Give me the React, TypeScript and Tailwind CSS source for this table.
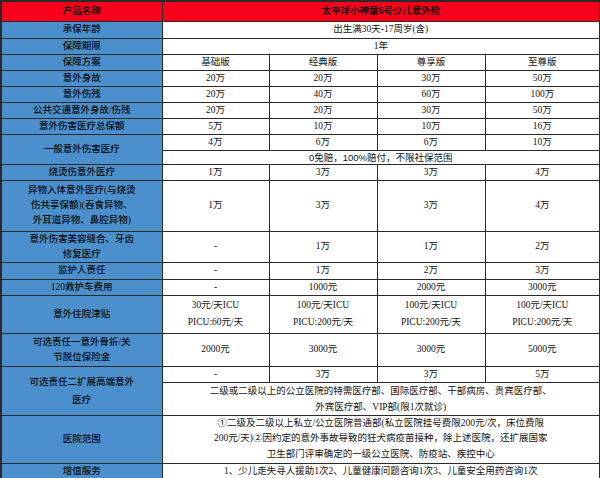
import type { ReactNode } from 'react'

const serif = 'font-["Liberation_Serif","Noto_Sans_CJK_SC",serif]'

function Label({ children, rowSpan }: { children: ReactNode; rowSpan?: number }) {
  return (
    <td
      rowSpan={rowSpan}
      className="border border-[#2a2a2a] bg-[#4b8fcc] px-1 text-center align-middle text-[9.5px] font-medium leading-[15px] text-[#0d0d0d]"
    >
      {children}
    </td>
  )
}

function Cell({ children, colSpan }: { children: ReactNode; colSpan?: number }) {
  return (
    <td
      colSpan={colSpan}
      className="border border-[#2a2a2a] bg-white px-1 text-center align-middle text-[9.5px] leading-[15px] text-[#111]"
    >
      {children}
    </td>
  )
}

function HeadCell({ children, colSpan }: { children: ReactNode; colSpan?: number }) {
  return (
    <td
      colSpan={colSpan}
      className="border border-[#2a2a2a] bg-[#f8001c] text-center align-middle text-[9.5px] leading-[15px]"
    >
      <span className="font-semibold text-[#1a0000]">{children}</span>
    </td>
  )
}

const simpleRows: { label: string; values: string[] }[] = [
  { label: '意外身故', values: ['20万', '20万', '30万', '50万'] },
  { label: '意外伤残', values: ['20万', '40万', '60万', '100万'] },
  { label: '公共交通意外身故/伤残', values: ['20万', '20万', '30万', '50万'] },
  { label: '意外伤害医疗总保额', values: ['5万', '10万', '10万', '16万'] },
]

export default function App() {
  return (
    <div className={`w-[600px] bg-white ${serif}`}>
      <table className="w-[599px] table-fixed border-collapse border-2 border-[#2a2a2a]">
        <colgroup>
          <col className="w-[161px]" />
          <col className="w-[107px]" />
          <col className="w-[108px]" />
          <col className="w-[108px]" />
          <col className="w-[115px]" />
        </colgroup>
        <tbody>
          <tr className="h-[20px]">
            <HeadCell>产品名称</HeadCell>
            <HeadCell colSpan={4}>太平洋小神童6号少儿意外险</HeadCell>
          </tr>
          <tr className="h-[17px]">
            <Label>承保年龄</Label>
            <Cell colSpan={4}>出生满30天-17周岁(含)</Cell>
          </tr>
          <tr className="h-[15px]">
            <Label>保障期限</Label>
            <Cell colSpan={4}>1年</Cell>
          </tr>
          <tr className="h-[15px]">
            <Label>保障方案</Label>
            <Cell>基础版</Cell>
            <Cell>经典版</Cell>
            <Cell>尊享版</Cell>
            <Cell>至尊版</Cell>
          </tr>
          {simpleRows.map((r) => (
            <tr key={r.label} className="h-[16px]">
              <Label>{r.label}</Label>
              {r.values.map((v, i) => (
                <Cell key={i}>{v}</Cell>
              ))}
            </tr>
          ))}
          <tr className="h-[16px]">
            <Label rowSpan={2}>一般意外伤害医疗</Label>
            <Cell>4万</Cell>
            <Cell>6万</Cell>
            <Cell>6万</Cell>
            <Cell>10万</Cell>
          </tr>
          <tr className="h-[14px]">
            <td
              colSpan={4}
              className='border border-[#2a2a2a] bg-white text-center font-["Liberation_Sans","Noto_Sans_CJK_SC",sans-serif] text-[9.5px] leading-[13px] text-[#111]'
            >
              0免赔，100%赔付，不限社保范围
            </td>
          </tr>
          <tr className="h-[16px]">
            <Label>烧烫伤意外医疗</Label>
            <Cell>1万</Cell>
            <Cell>3万</Cell>
            <Cell>3万</Cell>
            <Cell>4万</Cell>
          </tr>
          <tr className="h-[51px]">
            <Label>
              异物入体意外医疗(与烧烫
              <br />
              伤共享保额)(吞食异物、
              <br />
              外耳道异物、鼻腔异物)
            </Label>
            <Cell>1万</Cell>
            <Cell>3万</Cell>
            <Cell>3万</Cell>
            <Cell>4万</Cell>
          </tr>
          <tr className="h-[31px]">
            <Label>
              意外伤害美容缝合、牙齿
              <br />
              修复医疗
            </Label>
            <Cell>-</Cell>
            <Cell>1万</Cell>
            <Cell>1万</Cell>
            <Cell>2万</Cell>
          </tr>
          <tr className="h-[17px]">
            <Label>监护人责任</Label>
            <Cell>-</Cell>
            <Cell>1万</Cell>
            <Cell>2万</Cell>
            <Cell>3万</Cell>
          </tr>
          <tr className="h-[16px]">
            <Label>120救护车费用</Label>
            <Cell>-</Cell>
            <Cell>1000元</Cell>
            <Cell>2000元</Cell>
            <Cell>3000元</Cell>
          </tr>
          <tr className="h-[38px]">
            <Label>意外住院津贴</Label>
            <Cell>
              <div className="leading-[17px]">
                30元/天ICU
                <br />
                PICU:60元/天
              </div>
            </Cell>
            {[0, 1, 2].map((i) => (
              <Cell key={i}>
                <div className="leading-[17px]">
                  100元/天ICU
                  <br />
                  PICU:200元/天
                </div>
              </Cell>
            ))}
          </tr>
          <tr className="h-[33px]">
            <Label>
              可选责任一意外骨折/关
              <br />
              节脱位保险金
            </Label>
            <Cell>2000元</Cell>
            <Cell>3000元</Cell>
            <Cell>3000元</Cell>
            <Cell>5000元</Cell>
          </tr>
          <tr className="h-[16px]">
            <Label rowSpan={2}>
              <div className="leading-[18px]">
                可选责任二扩展高端意外
                <br />
                医疗
              </div>
            </Label>
            <Cell>-</Cell>
            <Cell>3万</Cell>
            <Cell>3万</Cell>
            <Cell>5万</Cell>
          </tr>
          <tr className="h-[32px]">
            <Cell colSpan={4}>
              <div className="leading-[16px]">
                二级或二级以上的公立医院的特需医疗部、国际医疗部、干部病房、贵宾医疗部、
                <br />
                外宾医疗部、VIP部(限1次就诊)
              </div>
            </Cell>
          </tr>
          <tr className="h-[48px]">
            <Label>医院范围</Label>
            <Cell colSpan={4}>
              <div className="leading-[15.5px]">
                ①二级及二级以上私立/公立医院普通部(私立医院挂号费限200元/次，床位费限
                <br />
                200元/天)②因约定的意外事故导致的狂犬病疫苗接种，除上述医院，还扩展国家
                <br />
                卫生部门评审确定的一级公立医院、防疫站、疾控中心
              </div>
            </Cell>
          </tr>
          <tr className="h-[16px]">
            <Label>增值服务</Label>
            <Cell colSpan={4}>1、少儿走失寻人援助1次2、儿童健康问题咨询1次3、儿童安全用药咨询1次</Cell>
          </tr>
        </tbody>
      </table>
    </div>
  )
}
